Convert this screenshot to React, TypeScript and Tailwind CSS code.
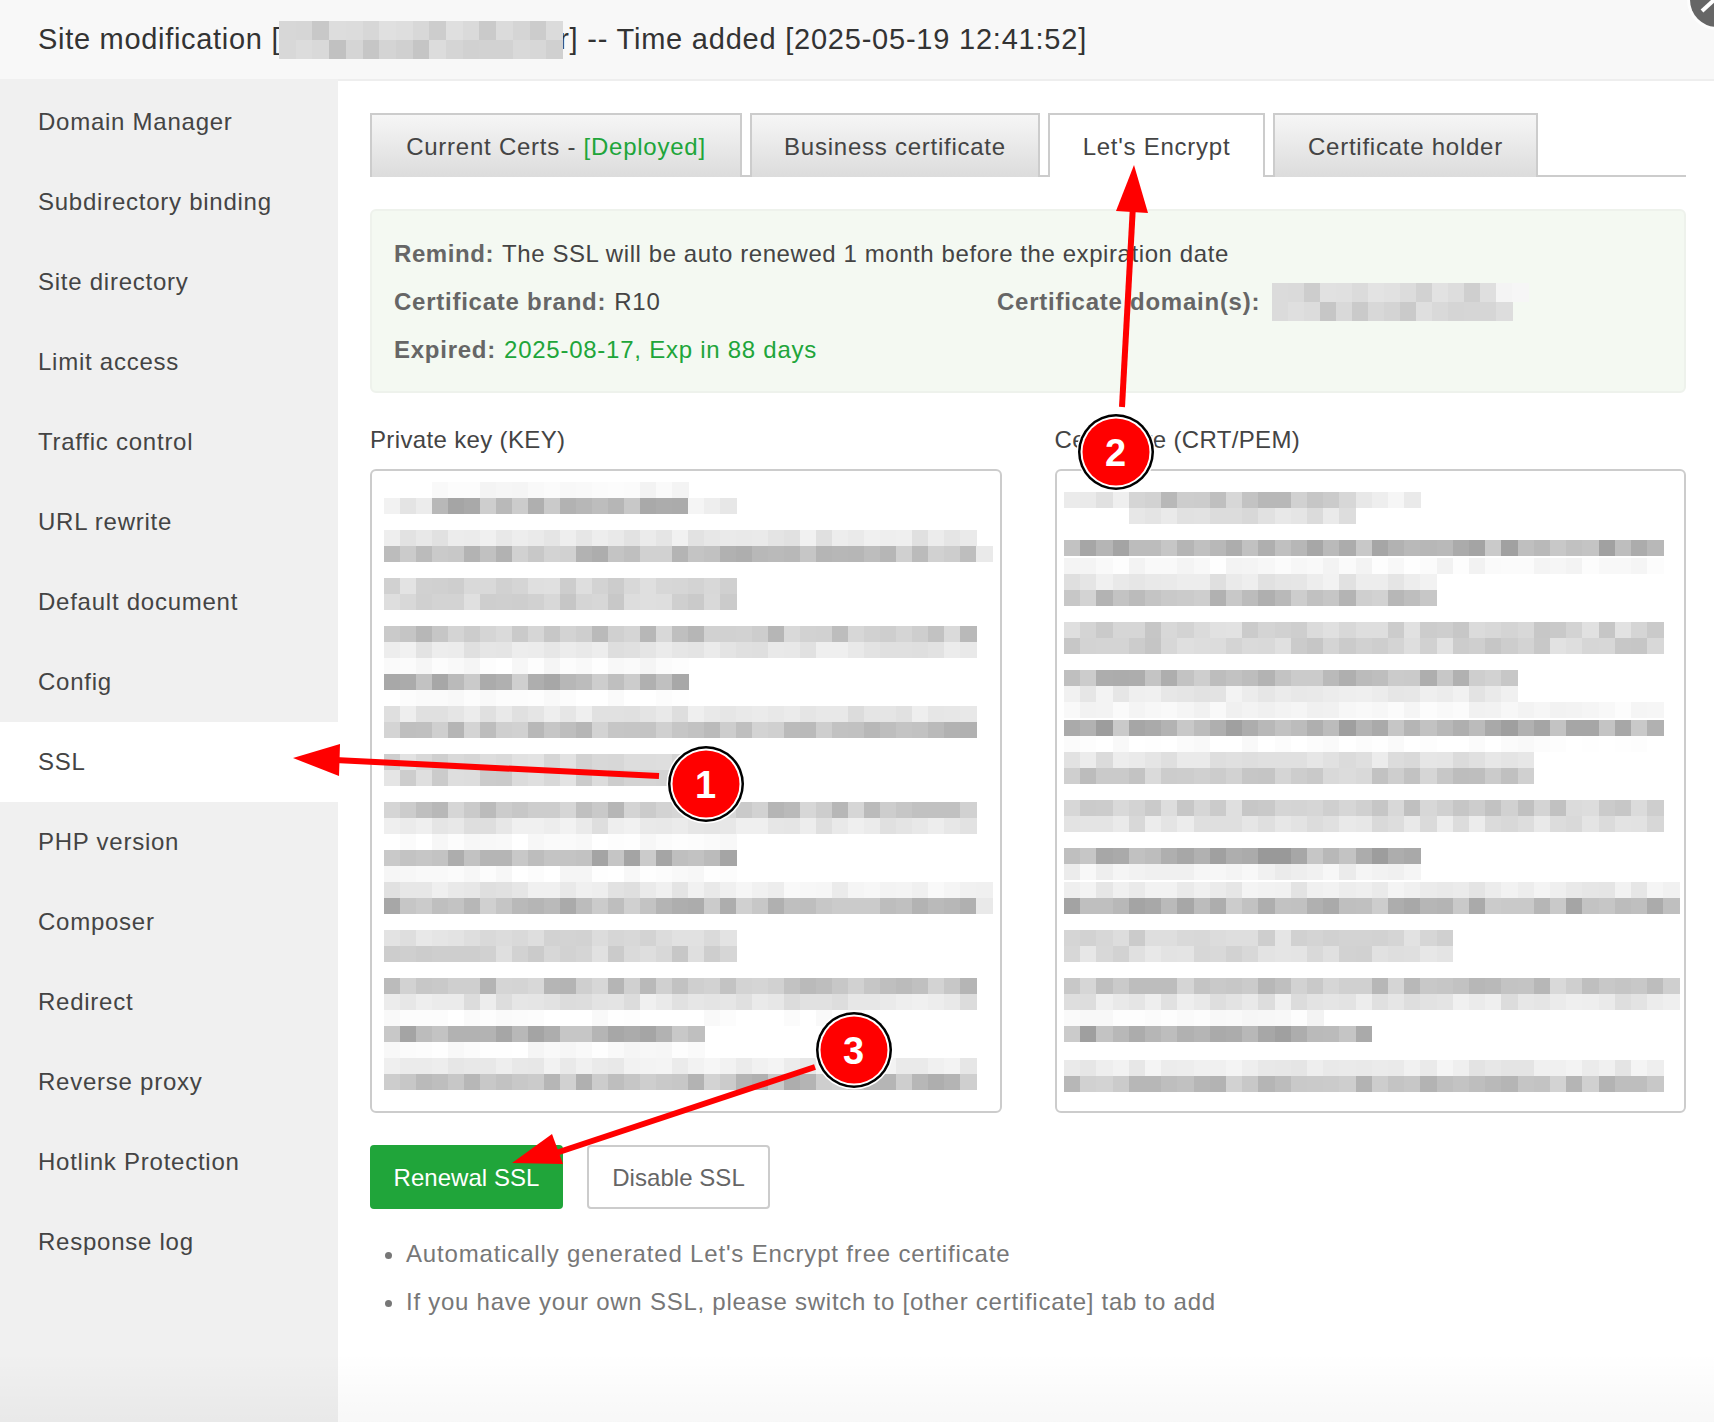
const MENU = ['Domain Manager', 'Subdirectory binding', 'Site directory', 'Limit access', 'Traffic control', 'URL rewrite', 'Default document', 'Config', 'SSL', 'PHP version', 'Composer', 'Redirect', 'Reverse proxy', 'Hotlink Protection', 'Response log'];

// y, first cell, cell count, grey
type Row = [number, number, number, number];

const KEY_ROWS: Row[] = [
  [0, 3, 16, 248], [16, 0, 3, 236], [16, 3, 16, 186], [16, 19, 3, 238],
  [48, 0, 37, 232], [64, 0, 37, 192], [64, 37, 1, 236],
  [96, 0, 22, 216], [112, 0, 22, 212],
  [144, 0, 37, 200], [160, 0, 37, 232], [176, 0, 19, 250], [192, 0, 19, 186], [208, 0, 19, 252],
  [224, 0, 37, 230], [240, 0, 37, 194],
  [272, 0, 19, 218], [288, 0, 19, 216],
  [320, 0, 37, 198], [336, 0, 37, 232], [352, 0, 22, 251], [368, 0, 22, 184], [384, 0, 22, 250],
  [400, 0, 21, 232], [400, 21, 17, 242], [416, 0, 37, 188], [416, 37, 1, 240],
  [448, 0, 22, 222], [464, 0, 22, 212],
  [496, 0, 37, 198], [512, 0, 37, 230], [528, 0, 30, 253],
  [544, 0, 20, 182], [560, 0, 20, 250],
  [576, 0, 37, 238], [592, 0, 37, 192],
];

const CRT_ROWS: Row[] = [
  [0, 0, 4, 234], [0, 4, 14, 200], [0, 18, 4, 238], [16, 4, 14, 226],
  [48, 0, 37, 180], [66, 0, 37, 248], [82, 0, 23, 232], [98, 0, 23, 192],
  [130, 0, 37, 212], [146, 0, 37, 212],
  [178, 0, 28, 192], [194, 0, 28, 234], [210, 0, 37, 246], [228, 0, 37, 180], [244, 0, 37, 253],
  [260, 0, 29, 226], [276, 0, 29, 204],
  [308, 0, 37, 208], [324, 0, 37, 226],
  [356, 0, 22, 176], [372, 0, 22, 242], [390, 0, 38, 236], [406, 0, 38, 184],
  [438, 0, 24, 216], [454, 0, 24, 220],
  [486, 0, 38, 200], [502, 0, 38, 230], [518, 0, 16, 248], [534, 0, 19, 180],
  [568, 0, 37, 236], [584, 0, 37, 192],
];

const TITLE_ROWS: Row[] = [[0, 0, 17, 214], [19, 0, 17, 208]];
const DOMAIN_ROWS: Row[] = [[0, 0, 14, 218], [0, 14, 2, 238], [19, 0, 15, 212]];

function grey(seed: number, base: number) {
  const r = Math.sin(seed * 91.17) * 43758.5453;
  const v = Math.round(base + (r - Math.floor(r) - 0.5) * ((255 - base) * 0.5 + 8));
  const c = Math.min(255, v);
  return `rgb(${c},${c},${c})`;
}

function Mosaic({ rows, w, h, cell, rowH = 16, className }: { rows: Row[]; w: number; h: number; cell: number; rowH?: number; className?: string }) {
  return (
    <svg width={w} height={h} className={className} shapeRendering="crispEdges">
      {rows.map(([y, start, count, base]) =>
        Array.from({ length: count }, (_, i) => (
          <rect key={`${y}-${start + i}`} x={(start + i) * cell} y={y} width={cell + 0.5} height={rowH} fill={grey(y * 7 + start + i * 13 + 1, base)} />
        ))
      )}
    </svg>
  );
}

function Badge({ x, y, n }: { x: number; y: number; n: number }) {
  return (
    <g>
      <circle cx={x} cy={y} r={39.5} fill="#fff" />
      <circle cx={x} cy={y} r={38} fill="#000" />
      <circle cx={x} cy={y} r={35.5} fill="#fff" />
      <circle cx={x} cy={y} r={33.5} fill="#ff0000" />
      <text x={x} y={y + 14} textAnchor="middle" fontSize={38} fontWeight={700} fill="#fff" fontFamily="'Liberation Sans', sans-serif">{n}</text>
    </g>
  );
}

function Annotations() {
  return (
    <svg width={1714} height={1422} className="absolute top-0 left-0 pointer-events-none">
      <circle cx={1717} cy={0} r={30} fill="#ffffff" opacity={0.7} />
      <circle cx={1717} cy={0} r={27} fill="#666666" />
      <path d="M1702 11 L1714 0" stroke="#fff" strokeWidth={4} />

      <path d="M335 760 L659 776" stroke="#ff0000" strokeWidth={6} />
      <polygon points="293,758 340,744 339,776" fill="#ff0000" />
      <path d="M1122 407 L1133 205" stroke="#ff0000" strokeWidth={6} />
      <polygon points="1134,165 1116,211 1148,213" fill="#ff0000" />
      <path d="M815 1067 L550 1155" stroke="#ff0000" strokeWidth={6} />
      <polygon points="512,1163 552,1134 563,1164" fill="#ff0000" />

      <Badge x={706} y={784} n={1} />
      <Badge x={1116} y={452} n={2} />
      <Badge x={854} y={1050} n={3} />
    </svg>
  );
}

function Tab({ width, active, children }: { width: string; active?: boolean; children: React.ReactNode }) {
  return (
    <div className={`${width} h-[64px] -mb-[2px] pt-[2px] flex items-center justify-center border-2 border-b-0 border-[#cccccc] ${active ? 'bg-white' : 'bg-gradient-to-b from-[#f6f6f6] to-[#dcdcdc]'}`}>
      {children}
    </div>
  );
}

export default function App() {
  return (
    <div className="relative w-[1714px] h-[1422px] overflow-hidden bg-white text-[24px] tracking-[0.75px] text-[#444444] font-['Liberation_Sans',sans-serif]">
      <div className="h-[79px] pt-[1px] pl-[38px] flex items-center bg-[#f8f8f8] text-[29px] tracking-[0.7px] text-[#333333] whitespace-pre">
        <span>Site modification [</span>
        <Mosaic rows={TITLE_ROWS} w={284} h={38} cell={16.7} rowH={19} className="relative z-10 -ml-[1px] -mr-[4px]" />
        <span className="tracking-[0.78px]">r] -- Time added [2025-05-19 12:41:52]</span>
      </div>

      <div className="flex h-[1343px]">
        <div className="w-[338px] shrink-0 pt-[3px] bg-[#f0f0f0]">
          {MENU.map((m) => (
            <div key={m} className={`h-[80px] pl-[38px] flex items-center ${m === 'SSL' ? 'bg-white' : ''}`}>{m}</div>
          ))}
        </div>

        <div className="flex-1 border-t-2 border-[#eeeeee] pt-[32px] pl-[32px] pr-[28px]">
          <div className="flex gap-[8px] border-b-2 border-[#cccccc] h-[64px]">
            <Tab width="w-[372px]">
              <span>Current Certs - <span className="text-[#20a53a]">[Deployed]</span></span>
            </Tab>
            <Tab width="w-[290px]">Business certificate</Tab>
            <Tab width="w-[217px]" active>Let's Encrypt</Tab>
            <Tab width="w-[265px]">Certificate holder</Tab>
          </div>

          <div className="mt-[32px] h-[184px] px-[22px] pt-[19px] border-2 border-[#eef2ec] rounded-[6px] bg-[#f4f9f2] leading-[48px]">
            <div className="tracking-[0.58px]"><b className="text-[#666666] mr-[8px]">Remind:</b>The SSL will be auto renewed 1 month before the expiration date</div>
            <div className="flex">
              <div className="w-[603px]"><b className="text-[#666666] mr-[8px]">Certificate brand:</b>R10</div>
              <b className="w-[275px] text-[#666666]">Certificate domain(s):</b>
              <Mosaic rows={DOMAIN_ROWS} w={262} h={38} cell={16} rowH={19} className="mt-[5px]" />
            </div>
            <div><b className="text-[#666666] mr-[8px]">Expired:</b><span className="text-[#20a53a]">2025-08-17, Exp in 88 days</span></div>
          </div>

          <div className="grid grid-cols-2 gap-[53px] mt-[31px] tracking-[0.35px]">
            <div>
              <div className="h-[32px] mb-[13px] leading-[32px]">Private key (KEY)</div>
              <div className="h-[644px] pt-[11px] pl-[12px] border-2 border-[#cccccc] rounded-[6px]">
                <Mosaic rows={KEY_ROWS} w={618} h={612} cell={16} />
              </div>
            </div>
            <div>
              <div className="h-[32px] mb-[13px] leading-[32px]">Certificate (CRT/PEM)</div>
              <div className="h-[644px] pt-[21px] pl-[7px] border-2 border-[#cccccc] rounded-[6px]">
                <Mosaic rows={CRT_ROWS} w={618} h={604} cell={16.2} />
              </div>
            </div>
          </div>

          <div className="flex gap-[24px] mt-[32px] tracking-[0.05px]">
            <button className="w-[193px] h-[64px] pt-[2px] rounded-[4px] bg-[#20a53a] text-white">Renewal SSL</button>
            <button className="w-[183px] h-[64px] pt-[2px] rounded-[4px] border-2 border-[#cccccc] bg-white text-[#666666]">Disable SSL</button>
          </div>

          <ul className="mt-[21px] pl-[36px] list-disc leading-[48px] text-[#777777]">
            <li className="tracking-[0.83px]">Automatically generated Let's Encrypt free certificate</li>
            <li>If you have your own SSL, please switch to [other certificate] tab to add</li>
          </ul>
        </div>
      </div>

      <div className="absolute left-0 right-0 bottom-0 h-[70px] pointer-events-none bg-gradient-to-b from-black/0 to-black/[0.03]" />
      <Annotations />
    </div>
  );
}
